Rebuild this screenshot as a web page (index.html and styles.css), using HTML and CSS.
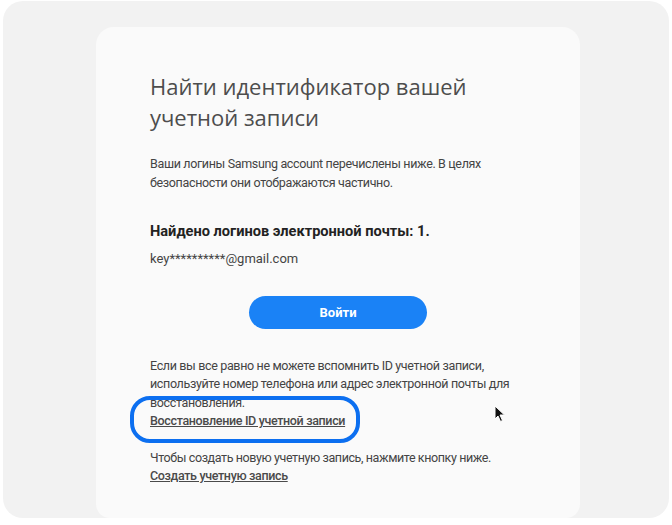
FILE: index.html
```html
<!DOCTYPE html>
<html lang="ru">
<head>
<meta charset="utf-8">
<link rel="stylesheet" href="styles.css">
</head>
<body>
<div class="frame">
  <div class="card">
    <h1 class="title">Найти идентификатор вашей учетной записи</h1>
    <p class="text intro">Ваши логины Samsung account перечислены ниже. В целях безопасности они отображаются частично.</p>
    <h2 class="found">Найдено логинов электронной почты: 1.</h2>
    <p class="text email">key**********@gmail.com</p>
    <div class="btn-row"><button class="btn">Войти</button></div>
    <p class="text help">Если вы все равно не можете вспомнить ID учетной записи, используйте номер телефона или адрес электронной почты для восстановления.</p>
    <div class="link-wrap">
      <a class="link" href="#">Восстановление ID учетной записи</a>
      <span class="ring"></span>
    </div>
    <p class="text create">Чтобы создать новую учетную запись, нажмите кнопку ниже.</p>
    <a class="link" href="#">Создать учетную запись</a>
    <svg class="cursor" width="12" height="18" viewBox="0 0 12 18"><path d="M1 1 L1 14 L4 11 L6.5 16.5 L8.5 15.5 L6 10 L10.5 10 Z" fill="#111" stroke="#fff" stroke-width="1"/></svg>
  </div>
</div>
</body>
</html>
```
FILE: styles.css
```css
* { box-sizing: border-box; }
html, body { margin: 0; padding: 0; background: #ffffff; }
body { font-family: Roboto, "Noto Sans", sans-serif; }
.frame {
  margin: 1px 3px 0 3px;
  height: 517px;
  background: #f2f2f2;
  border-radius: 20px;
  padding: 26px 0 0 93px;
  overflow: hidden;
}
.card {
  position: relative;
  width: 484px;
  height: 491px;
  background: #fafafa;
  border-radius: 18px 18px 14px 14px;
  padding: 44px 30px 0 54px;
  font-size: 12.5px;
  line-height: 18.5px;
}
.title {
  margin: 0;
  font-family: "Open Sans", sans-serif;
  font-size: 22px;
  font-weight: 400;
  line-height: 31px;
  color: #4d4d4d;
  width: 340px;
}
.text {
  margin: 0;
  font-size: 12.5px;
  line-height: 18.5px;
  letter-spacing: -0.4px;
  color: #444;
}
.intro { margin-top: 22px; letter-spacing: -0.35px; }
.found {
  margin: 28px 0 0;
  font-size: 14.6px;
  font-weight: 700;
  line-height: 22px;
  color: #222;
}
.email { margin-top: 7.5px; font-size: 13px; letter-spacing: 0; }
.btn-row { display: flex; padding-left: 99px; margin-top: 27.5px; }
.btn {
  width: 178px;
  height: 33px;
  border: none;
  border-radius: 17px;
  background: #1a82f6;
  color: #fff;
  font-family: inherit;
  font-size: 13px;
  font-weight: 700;
}
.help { margin-top: 28px; letter-spacing: -0.35px; }
.link-wrap { position: relative; }
.link {
  display: block;
  width: fit-content;
  font-size: 12.5px;
  line-height: 18.5px;
  letter-spacing: -0.35px;
  font-weight: 500;
  color: #4a4a4a;
  text-decoration: underline;
}
.ring {
  position: absolute;
  left: -20px;
  top: -16px;
  width: 230px;
  height: 47px;
  border: 4px solid #0c6ff0;
  border-radius: 20px;
}
.create { margin-top: 18px; }
.cursor { position: absolute; left: 398px; top: 378px; }
```
